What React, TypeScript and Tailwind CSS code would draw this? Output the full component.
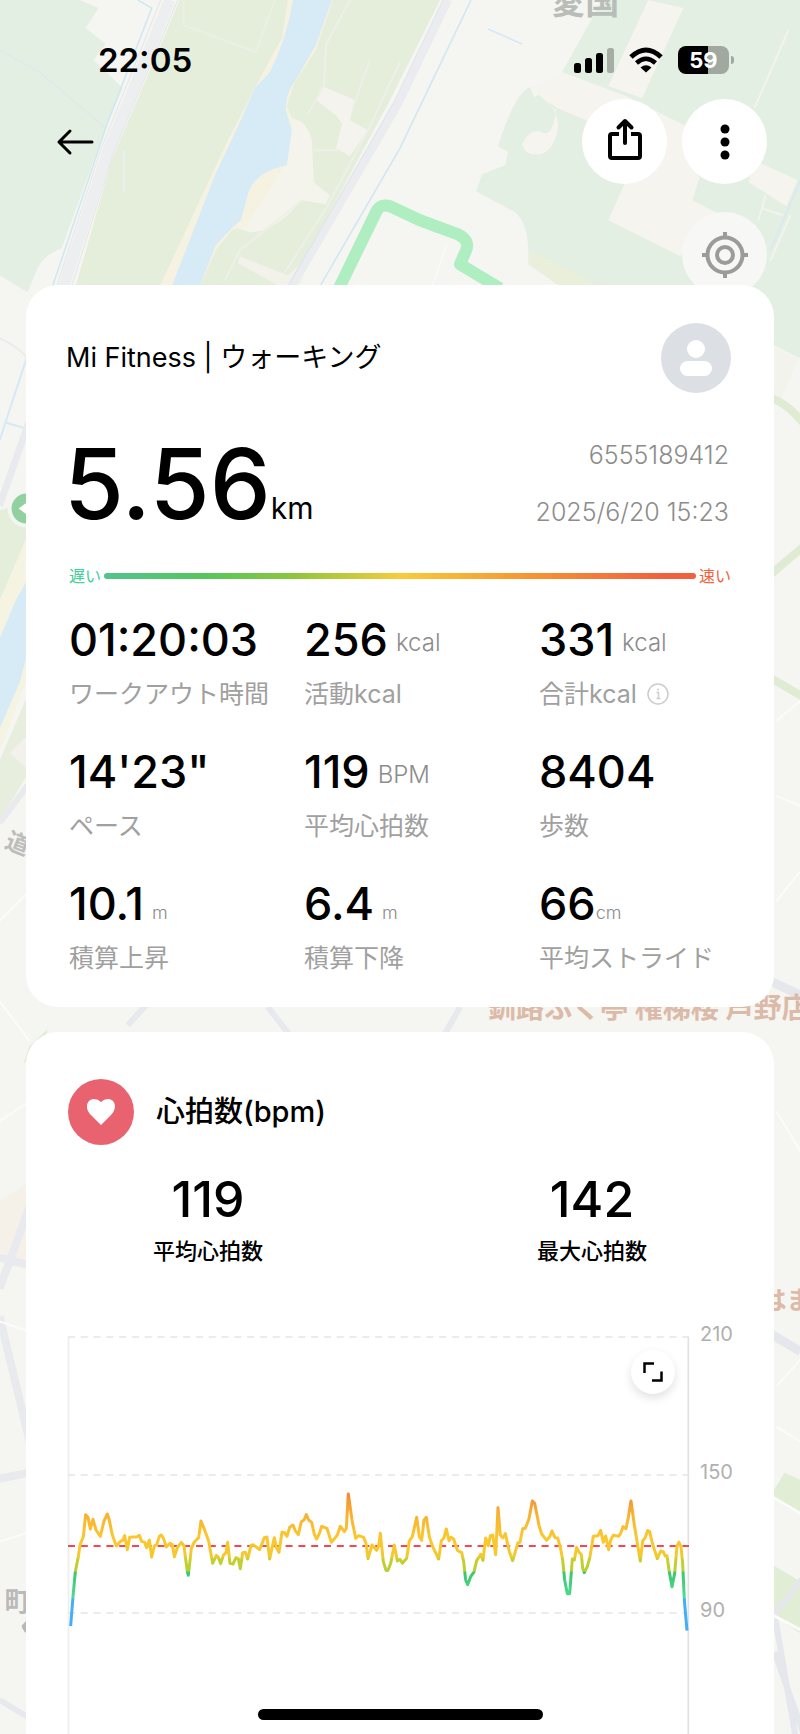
import { ReactNode } from "react";

type Stat = {
  value: string;
  label: string;
  unit?: string;
  unitClass?: string;
  info?: boolean;
};

const LARGE_UNIT = "ml-2 text-2xl leading-[50px]";
const SMALL_UNIT = "text-lg leading-[38px]";

const STATS: Stat[] = [
  { value: "01:20:03", label: "ワークアウト時間" },
  { value: "256", label: "活動kcal", unit: "kcal", unitClass: LARGE_UNIT },
  {
    value: "331",
    label: "合計kcal",
    unit: "kcal",
    unitClass: LARGE_UNIT,
    info: true,
  },
  { value: "14'23\"", label: "ペース" },
  { value: "119", label: "平均心拍数", unit: "BPM", unitClass: LARGE_UNIT },
  { value: "8404", label: "歩数" },
  { value: "10.1", label: "積算上昇", unit: "m", unitClass: `ml-2 ${SMALL_UNIT}` },
  { value: "6.4", label: "積算下降", unit: "m", unitClass: `ml-2 ${SMALL_UNIT}` },
  { value: "66", label: "平均ストライド", unit: "cm", unitClass: SMALL_UNIT },
];

const AXIS = ["210", "150", "90"];

// x,y pairs in the 1863 x 1191 chart space: 150 bpm is y=414, 90 bpm is y=828
const HEART_RATE =
  "8,867 15,779 22,704 31,659 36,624 46,599 53,533 60,541 67,576 75,547 84,579 97,598 108,552 118,531 123,545 133,594 145,627 159,611 164,611 170,596 178,638 185,601 208,599 214,595 221,613 230,616 236,632 244,609 251,660 259,627 266,623 274,598 280,594 286,603 295,630 306,619 313,623 319,659 328,632 340,616 348,627 358,704 361,715 370,634 379,615 392,602 399,552 408,574 422,613 434,679 445,655 451,661 458,680 466,655 474,647 479,616 486,679 495,681 504,662 511,665 517,695 524,647 532,646 539,666 549,625 555,623 575,638 589,602 597,600 605,666 613,629 619,602 625,631 633,646 642,586 650,587 657,598 665,571 675,564 683,583 691,593 700,554 708,549 715,533 722,549 731,556 739,592 746,606 754,590 761,568 777,574 790,616 798,607 808,594 817,568 829,584 835,574 841,471 852,549 863,604 872,596 887,601 894,619 900,665 912,624 926,640 932,627 937,589 946,674 954,700 960,700 968,679 979,624 988,672 996,667 1003,679 1016,664 1024,612 1033,599 1046,541 1054,599 1061,610 1068,549 1075,541 1084,599 1094,629 1112,666 1120,611 1128,602 1135,576 1143,611 1149,601 1157,606 1168,640 1181,647 1187,674 1193,729 1199,743 1208,719 1218,705 1226,671 1238,652 1245,670 1253,603 1261,626 1267,596 1274,594 1283,653 1290,512 1297,594 1305,603 1312,590 1324,644 1334,671 1342,644 1350,617 1356,616 1364,575 1372,574 1383,545 1393,492 1400,499 1413,565 1421,591 1436,610 1444,601 1452,582 1461,602 1469,603 1477,631 1484,669 1490,729 1498,770 1505,770 1513,666 1519,669 1526,631 1534,647 1540,652 1544,694 1549,707 1558,689 1566,659 1576,598 1590,596 1598,580 1606,616 1613,597 1622,638 1628,609 1636,595 1652,598 1658,589 1665,569 1674,575 1681,541 1689,492 1699,564 1708,619 1717,672 1724,612 1732,601 1739,581 1745,584 1754,622 1768,665 1778,642 1786,645 1792,657 1797,656 1803,699 1812,749 1820,709 1827,627 1833,616 1839,629 1844,679 1849,789 1857,881";

function MapBackground() {
  return (
    <svg
      aria-hidden="true"
      viewBox="0 0 800 1734"
      preserveAspectRatio="xMidYMin slice"
      className="absolute inset-0 h-full w-full"
    >
      <rect width="800" height="1734" fill="#f5f5f1" />
      {/* left fields and embankment */}
      <path d="M0 0H80L99 8L86 28L106 44L94 60L123 88L107 125L62 248Q44 255 38 268L28 292L0 275Z" fill="#e4efe3" />
      <path d="M0 50L40 72L106 128" stroke="#dfe9ea" strokeWidth="1.5" fill="none" />
      <path d="M180 0H336L250 180L202 286H76L112 160Z" fill="#e4eeda" />
      <path d="M184 0V25L256 52L275 0" stroke="#eaf0e4" strokeWidth="2" fill="none" />
      <path d="M138 0L152 8L107 125L53 286" stroke="#cfe7f3" strokeWidth="1.5" fill="none" />
      <path d="M170 0L108 152L64 286" stroke="#eceef0" strokeWidth="11" fill="none" />
      <path d="M161 0L101 150L57 286M178 0L114 152L72 286" stroke="#e4e6ea" strokeWidth="1" fill="none" />
      <path d="M124 150V192" stroke="#eceff0" strokeWidth="2" />
      {/* right bank */}
      <path d="M330 0H440L390 100L290 286H200L250 180Z" fill="#e4eeda" />
      <path d="M290 118Q306 118 312 140L314 182L330 195L326 204L302 200Q275 232 250 232L232 226L242 185L285 160Z" fill="#f4f3ec" />
      <path d="M322 86L355 100L350 120L368 130L350 156L336 148L342 124L337 116L316 100Z" fill="#f4f3ee" />
      <path d="M240 256L288 275L310 255L300 286H280L238 263Z" fill="#f2f2ea" />
      <path d="M350 0L326 45L324 86L308 114M314 150H340M370 60L352 110M400 62L368 130L328 205L285 272M302 200L240 250L225 280" stroke="#edf0e8" strokeWidth="2" fill="none" />
      {/* river */}
      <path d="M288 0L282 38L262 75L228 140L160 286H200L216 250L232 230L246 226L285 165L293 120L287 106L294 84L316 50L333 0Z" fill="#f5f2e2" />
      <path d="M293 0Q288 35 270 72L255 88L240 122L215 175L172 286H200L216 245L232 228L241 220L247 198Q252 172 287 165L292 130L286 110Q286 92 296 80L316 45L332 0Z" fill="#d7ebf6" />
      <path d="M448 0L398 104L292 286" stroke="#eaecef" strokeWidth="8" fill="none" />
      <path d="M443 0L394 102L288 286" stroke="#e0e2ea" strokeWidth="1" fill="none" />
      <path d="M471 0L400 148L320 286" stroke="#cfe7f3" strokeWidth="1.5" fill="none" />
      {/* right fields */}
      <path d="M602 0L562 72L534 98L530 87Q515 92 498 146L508 152L505 165L482 174L476 191L515 212Q530 225 528 262L605 292L640 345H774L800 358V0Z" fill="#e4efe3" />
      <path d="M648 0L683 8L642 98L608 86Z" fill="#f5f4ef" />
      <path d="M562 72L628 97L690 128L699 178L692 200L716 212L680 256L608 220L625 182L586 120L557 108L530 88Z" fill="#f5f4ef" />
      <path d="M530 87Q555 100 558 125Q555 150 540 154Q525 156 522 144Q528 130 540 131Q552 140 556 110Z" fill="#f5f4ef" />
      <path d="M754 160L797 180L786 206L748 182Z" fill="#f5f4ef" />
      <path d="M788 30L754 108M765 195L758 220M762 208L782 215M790 215L770 260" stroke="#f3f3ee" strokeWidth="2" fill="none" />
      <path d="M488 29L522 44M800 180L770 250" stroke="#d5e9f4" strokeWidth="1.5" fill="none" />
      <path d="M530 250L600 286H560L528 264Z" fill="#e9efdb" />
      <path d="M447 244L432 286" stroke="#fafafa" strokeWidth="1.5" />
      <path d="M338 290L376 212Q380 203 390 206L420 220L458 234Q470 240 466 250L460 264L500 288" stroke="#aeeec0" strokeWidth="12" strokeLinejoin="round" fill="none" />
      <text x="551" y="14" fontSize="34" fontWeight="700" fill="#b9bdb7">
        愛国
      </text>
      {/* left strip */}
      <path d="M0 338Q18 345 30 360" stroke="#e8ebee" strokeWidth="1.5" fill="none" />
      <path d="M28 355L0 440M6 422L26 428" stroke="#d5eaf5" strokeWidth="2" fill="none" />
      <path d="M30 500V590L0 650V510Z" fill="#e4eeda" />
      <path d="M30 420L0 505" stroke="#e8eaee" strokeWidth="7" />
      <path d="M30 530L0 600V750L30 672Z" fill="#f5f3e2" />
      <path d="M30 575L16 600L0 638V728L20 682L30 645Z" fill="#d7ebf6" />
      <path d="M30 690L0 760V820L30 770Z" fill="#e8eedd" />
      <path d="M28 735L10 752L30 770Z" fill="#f2f1ec" />
      <path d="M30 782L0 822" stroke="#e8eaee" strokeWidth="6" />
      <circle cx="27" cy="508" r="17" fill="#91d09f" stroke="#f3f5f1" strokeWidth="4" />
      <path d="M19 508L30 500V516Z" fill="#fff" />
      <text x="4" y="846" fontSize="24" fontWeight="700" fill="#bdbdbd" transform="rotate(22 4 846)">
        道
      </text>
      <path d="M30 1045L48 1028L42 1050L24 1062Z" fill="#deecd0" />
      <path d="M0 1200L30 1180V1262L0 1250Z" fill="#f6f1e8" />
      <path d="M0 1287L30 1205M0 1256L30 1264M0 1315L32 1448M0 1477L30 1471" stroke="#e9eaee" strokeWidth="8" fill="none" />
      <path d="M0 1698L30 1716M128 1024L150 1000M268 1006L290 1034M460 1006L444 1034" stroke="#e8e9ee" strokeWidth="6" fill="none" />
      <path d="M0 1000L30 1040M0 920L30 890M0 1120L30 1100M0 1320L30 1330M0 1540L30 1530" stroke="#fbfbfa" strokeWidth="2" />
      <text x="5" y="1609" fontSize="26" fontWeight="700" fill="#bababa">
        町
      </text>
      <path d="M22 1624Q27 1618 30 1618V1632Q24 1632 22 1624" fill="#b5b7b8" />
      {/* right strip */}
      <path d="M770 345L798 358L780 400L770 395Z" fill="#f3f3ee" />
      <path d="M772 398Q788 404 804 424M770 574L804 545M770 677L804 697" stroke="#dfecd3" strokeWidth="8" fill="none" />
      <path d="M776 720L800 700M776 795L800 805M776 900L800 870M776 1110L800 1150M776 1385L800 1358M776 1425L800 1440" stroke="#fbfbfa" strokeWidth="2" fill="none" />
      <path d="M770 980L800 994M770 1332L800 1350" stroke="#e6e7ed" strokeWidth="9" fill="none" />
      <path d="M770 1494L784 1471L804 1480V1512Z" fill="#e1edd4" />
      <path d="M770 1562L804 1582V1634L770 1612Z" fill="#e1edd4" />
      <path d="M804 1574L774 1612L796 1740M774 1650L804 1734" stroke="#e6e7ed" strokeWidth="6" fill="none" />
      <path d="M770 1494L804 1514M770 1612L804 1630" stroke="#fbfbfa" strokeWidth="3" />
      <text x="488" y="1017" fontSize="28" fontWeight="700" fill="#dcbaa8">
        釧路ふく亭 権梯楼 芦野店
      </text>
      <text x="761" y="1307" fontSize="25" fontWeight="700" fill="#dcbaa8">
        はま
      </text>
    </svg>
  );
}

function StatusBar() {
  return (
    <div className="flex h-20 items-end justify-between pl-[98px] pr-[66px]">
      <span className="text-[33px] leading-10 font-semibold">22:05</span>
      <div className="flex h-10 items-center">
        <svg viewBox="0 0 40 26" className="h-[26px] w-10" aria-label="Signal">
          <rect x="0" y="16" width="7" height="10" rx="2.5" />
          <rect x="11" y="11" width="7" height="15" rx="2.5" />
          <rect x="22" y="6" width="7" height="20" rx="2.5" />
          <rect x="33" y="1" width="7" height="25" rx="2.5" fill="#a5ada4" />
        </svg>
        <svg viewBox="0 0 34 26" className="ml-[15px] h-[26px] w-[34px]" aria-label="Wi-Fi" fill="none" stroke="#000">
          <path d="M2 10Q17 -4 32 10" strokeWidth="5" />
          <path d="M7.500 16Q17 7.500 26.500 16" strokeWidth="4.500" />
          <path d="M17 25.500L11.500 20.500Q17 16 22.500 20.500Z" fill="#000" stroke="none" />
        </svg>
        <div className="ml-[15px] flex h-7 w-[51px] items-center justify-center rounded-lg bg-linear-to-r from-black from-59% to-[#a0a8a0] to-59% text-[22px] font-bold text-white">
          59
        </div>
        <div className="ml-0.5 h-2 w-[3px] rounded-r-full bg-[#a0a8a0]" />
      </div>
    </div>
  );
}

function RoundButton({
  label,
  className = "bg-white",
  children,
}: {
  label: string;
  className?: string;
  children: ReactNode;
}) {
  return (
    <button
      type="button"
      aria-label={label}
      className={`flex size-[85px] items-center justify-center rounded-full ${className}`}
    >
      {children}
    </button>
  );
}

function StatItem({ stat }: { stat: Stat }) {
  return (
    <div className="whitespace-nowrap">
      <p className="flex items-end text-[45px] leading-[56px] font-medium">
        {stat.value}
        {stat.unit && (
          <span className={`font-light text-[#8c8c8c] ${stat.unitClass}`}>
            {stat.unit}
          </span>
        )}
      </p>
      <p className="mt-2 flex h-9 items-center text-[25px] leading-9 font-normal text-[#a0a0a0]">
        {stat.label}
        {stat.info && (
          <button type="button" aria-label="合計kcalについて" className="ml-2.5">
            <svg viewBox="0 0 22 22" className="size-[22px]" fill="none" stroke="#ccc" strokeWidth="1.500">
              <circle cx="11" cy="11" r="10" />
              <path d="M9.500 9.500H11.500V15M9.500 15.500H13.500" />
              <circle cx="11" cy="6.500" r="1" fill="#ccc" stroke="none" />
            </svg>
          </button>
        )}
      </p>
    </div>
  );
}

function SummaryCard() {
  return (
    <section className="rounded-[32px] bg-white pt-[38px] pb-[31px]">
      <div className="flex items-center justify-between pl-10 pr-[43px]">
        <h1 className="text-[27px] font-normal">Mi Fitness | ウォーキング</h1>
        <svg viewBox="0 0 70 70" className="size-[70px]" aria-label="プロフィール">
          <circle cx="35" cy="35" r="35" fill="#dcdfe3" />
          <circle cx="35" cy="26" r="9" fill="#fff" />
          <rect x="19" y="38" width="32" height="15" rx="7.500" fill="#fff" />
        </svg>
      </div>
      <div className="mt-[34px] flex items-center justify-between pl-[38px] pr-[45px]">
        <p className="text-[97px] leading-[96px] font-medium">
          5.56
          <span className="text-[30px] leading-none font-normal">km</span>
        </p>
        <div className="text-right text-[25px] font-light text-[#8c8c8c]">
          <p className="leading-[57px]">6555189412</p>
          <p className="leading-[57px]">2025/6/20 15:23</p>
        </div>
      </div>
      <div className="mt-[23px] flex h-6 items-center gap-[3px] px-[43px] text-base leading-6">
        <span className="text-[#3fcf9a]">遅い</span>
        <div className="h-1.5 flex-1 rounded-full bg-[linear-gradient(90deg,#50c58c_0%,#55c65c_17%,#8cc63c_32%,#f8cb3a_50%,#f59a30_70%,#f0603f_95%)]" />
        <span className="text-[#f0623c]">速い</span>
      </div>
      <div className="mt-6 grid grid-cols-3 gap-y-8 pl-[43px]">
        {STATS.map((stat) => (
          <StatItem key={stat.label} stat={stat} />
        ))}
      </div>
    </section>
  );
}

function HeartRateChart() {
  return (
    <div className="mt-[70px] flex pl-[42px]">
      <div className="relative flex-1">
        <svg
          viewBox="0 0 1863 1191"
          preserveAspectRatio="none"
          className="h-[397px] w-full overflow-visible"
          role="img"
          aria-label="心拍数グラフ"
          fill="none"
        >
          <defs>
            <linearGradient id="zones" gradientUnits="userSpaceOnUse" x1="0" y1="470" x2="0" y2="880">
              <stop offset="0" stopColor="#f28a35" />
              <stop offset="0.150" stopColor="#f8b132" />
              <stop offset="0.320" stopColor="#fbc72f" />
              <stop offset="0.460" stopColor="#f3c92f" />
              <stop offset="0.480" stopColor="#c3d030" />
              <stop offset="0.565" stopColor="#b9d02f" />
              <stop offset="0.575" stopColor="#3cc76e" />
              <stop offset="0.760" stopColor="#4ddb90" />
              <stop offset="0.770" stopColor="#45aef8" />
              <stop offset="1" stopColor="#45aef8" />
            </linearGradient>
          </defs>
          <path d="M1.500 0V1191" stroke="#eee" strokeWidth="5" />
          <path d="M1861 0V1191" stroke="#e2e2e2" strokeWidth="5" />
          <path d="M0 0H1863M0 414H1863M0 828H1863" stroke="#e5e5e5" strokeWidth="5" strokeDasharray="21 17.400" />
          <path d="M0 627H1863" stroke="#f4474f" strokeWidth="6" strokeDasharray="21 17.400" />
          <polyline points={HEART_RATE} stroke="url(#zones)" strokeWidth="9" strokeLinejoin="round" />
        </svg>
        <button
          type="button"
          aria-label="拡大"
          className="absolute top-[13px] right-3.5 flex size-11 items-center justify-center rounded-full bg-white shadow-[0_4px_10px_rgba(0,0,0,0.12)]"
        >
          <svg viewBox="0 0 20 20" className="size-5" fill="none" stroke="#000" strokeWidth="2.500">
            <path d="M1.500 11V1.500H11M18.500 9.500V18.500H9" />
          </svg>
        </button>
      </div>
      <div className="-mt-[15px] w-[85px] pl-[11px]">
        {AXIS.map((tick) => (
          <p key={tick} className="h-[138px] text-xl leading-6 text-[#b0b0b0]">
            {tick}
          </p>
        ))}
      </div>
    </div>
  );
}

function HeartRateCard() {
  return (
    <section className="mt-[25px] rounded-t-[32px] bg-white pt-[47px]">
      <div className="flex items-center gap-[22px] pl-[42px]">
        <svg viewBox="0 0 66 66" className="size-[66px]" aria-hidden="true">
          <circle cx="33" cy="33" r="33" fill="#e9626f" />
          <path d="M33 46L23 36C16 29 19 20 26 20Q30 20 33 23Q36 20 40 20C47 20 50 29 43 36Z" fill="#fff" />
        </svg>
        <h2 className="text-[29px] font-medium">心拍数(bpm)</h2>
      </div>
      <div className="mt-6 grid grid-cols-2 gap-5 text-center font-medium">
        <div>
          <p className="text-[50px] leading-[60px]">119</p>
          <p className="mt-1.5 text-[22px] leading-8">平均心拍数</p>
        </div>
        <div>
          <p className="text-[50px] leading-[60px]">142</p>
          <p className="mt-1.5 text-[22px] leading-8">最大心拍数</p>
        </div>
      </div>
      <HeartRateChart />
    </section>
  );
}

export default function App() {
  return (
    <div className="relative min-h-screen overflow-hidden font-['Inter','Noto_Sans_CJK_JP',sans-serif] text-black">
      <MapBackground />
      <header className="relative">
        <StatusBar />
        <div className="mt-[19px] flex items-center justify-between pl-14 pr-[33px]">
          <button type="button" aria-label="戻る">
            <svg viewBox="0 0 38 28" className="h-7 w-[38px]" fill="none" stroke="#000" strokeWidth="3" strokeLinecap="round" strokeLinejoin="round">
              <path d="M14 3L3 14L14 25M3 14H36" />
            </svg>
          </button>
          <div className="flex gap-[15px]">
            <RoundButton label="共有">
              <svg viewBox="0 0 36 48" className="h-12 w-9" fill="none" stroke="#000" strokeWidth="4" strokeLinecap="round" strokeLinejoin="round">
                <path d="M12 16H5Q3 16 3 18V38Q3 40 5 40H31Q33 40 33 38V18Q33 16 31 16H24" strokeLinecap="butt" />
                <path d="M18 25V3M11.500 9.500L18 3L24.500 9.500" />
              </svg>
            </RoundButton>
            <RoundButton label="メニュー">
              <svg viewBox="0 0 10 36" className="h-9 w-2.5">
                <circle cx="5" cy="5" r="4.500" />
                <circle cx="5" cy="18" r="4.500" />
                <circle cx="5" cy="31" r="4.500" />
              </svg>
            </RoundButton>
          </div>
        </div>
        <div className="mt-7 flex justify-end pr-[33px]">
          <RoundButton label="現在地" className="bg-[#f7f7f6]">
            <svg viewBox="0 0 48 48" className="size-12" fill="none" stroke="#9b9b9b" strokeWidth="4">
              <circle cx="24" cy="24" r="17.500" />
              <circle cx="24" cy="24" r="8" />
              <path d="M24 1V7M24 41V47M1 24H7M41 24H47" />
            </svg>
          </RoundButton>
        </div>
      </header>
      <main className="relative -mt-3 px-[26px]">
        <SummaryCard />
        <HeartRateCard />
      </main>
      <div className="absolute inset-x-0 bottom-4 flex justify-center">
        <div className="h-[11px] w-[285px] rounded-full bg-black" />
      </div>
    </div>
  );
}
